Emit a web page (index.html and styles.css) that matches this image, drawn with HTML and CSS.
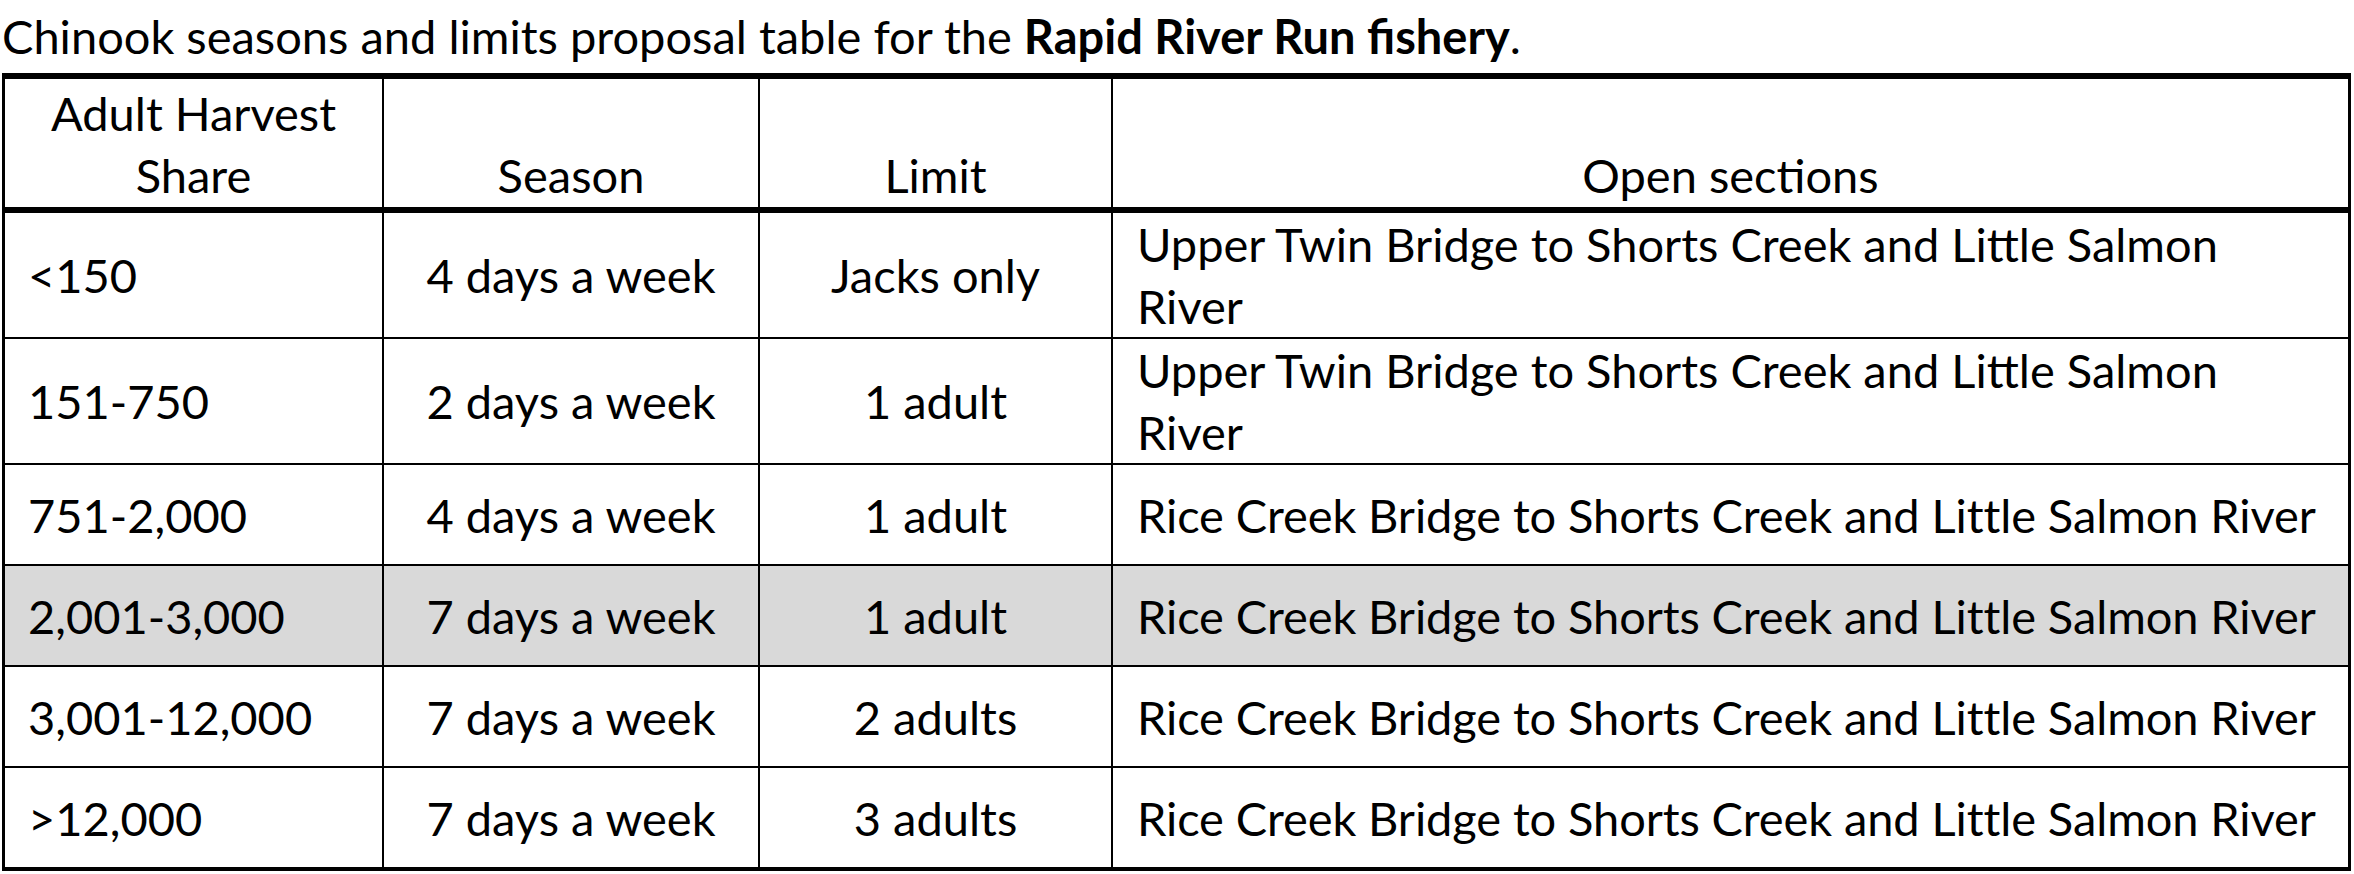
FILE: index.html
```html
<!DOCTYPE html>
<html>
<head>
<meta charset="utf-8">
<link rel="stylesheet" href="styles.css">
</head>
<body>
<p class="caption">Chinook seasons and limits proposal table for the <b>Rapid River Run fishery</b>.</p>
<div class="tbl" role="table">
  <div class="row head" role="row">
    <div class="cell" role="columnheader">Adult Harvest<br>Share</div>
    <div class="cell" role="columnheader">Season</div>
    <div class="cell" role="columnheader">Limit</div>
    <div class="cell" role="columnheader">Open sections</div>
  </div>
  <div class="row two" role="row">
    <div class="cell first" role="cell">&lt;150</div>
    <div class="cell mid" role="cell">4 days a week</div>
    <div class="cell mid" role="cell">Jacks only</div>
    <div class="cell wide" role="cell">Upper Twin Bridge to Shorts Creek and Little Salmon<br>River</div>
  </div>
  <div class="row two" role="row">
    <div class="cell first" role="cell">151-750</div>
    <div class="cell mid" role="cell">2 days a week</div>
    <div class="cell mid" role="cell">1 adult</div>
    <div class="cell wide" role="cell">Upper Twin Bridge to Shorts Creek and Little Salmon<br>River</div>
  </div>
  <div class="row one" role="row">
    <div class="cell first" role="cell">751-2,000</div>
    <div class="cell mid" role="cell">4 days a week</div>
    <div class="cell mid" role="cell">1 adult</div>
    <div class="cell wide single" role="cell">Rice Creek Bridge to Shorts Creek and Little Salmon River</div>
  </div>
  <div class="row one shade" role="row">
    <div class="cell first" role="cell">2,001-3,000</div>
    <div class="cell mid" role="cell">7 days a week</div>
    <div class="cell mid" role="cell">1 adult</div>
    <div class="cell wide single" role="cell">Rice Creek Bridge to Shorts Creek and Little Salmon River</div>
  </div>
  <div class="row one" role="row">
    <div class="cell first" role="cell">3,001-12,000</div>
    <div class="cell mid" role="cell">7 days a week</div>
    <div class="cell mid" role="cell">2 adults</div>
    <div class="cell wide single" role="cell">Rice Creek Bridge to Shorts Creek and Little Salmon River</div>
  </div>
  <div class="row one last" role="row">
    <div class="cell first" role="cell">&gt;12,000</div>
    <div class="cell mid" role="cell">7 days a week</div>
    <div class="cell mid" role="cell">3 adults</div>
    <div class="cell wide single" role="cell">Rice Creek Bridge to Shorts Creek and Little Salmon River</div>
  </div>
</div>
</body>
</html>
```
FILE: styles.css
```css
*, *::before, *::after {
  box-sizing: border-box;
}
html, body {
  margin: 0;
  padding: 0;
  background: #ffffff;
}
body {
  font-family: Lato, "Liberation Sans", sans-serif;
  font-size: 47px;
  color: #000;
  width: 2354px;
}
.caption {
  margin: 0 0 6px 0;
  padding: 5px 0 0 2px;
  height: 67px;
  line-height: 62px;
  white-space: nowrap;
}
.caption b {
  font-weight: 700;
}
.tbl {
  margin-left: 2px;
  width: 2349px;
  border-style: solid;
  border-color: #000;
  border-width: 6px 3px 4px 3px;
}
.row {
  display: grid;
  grid-template-columns: 379px 376px 353px 1fr;
  border-bottom: 2px solid #000;
}
.row.head {
  height: 134px;
  border-bottom: 6px solid #000;
}
.row.two {
  height: 126px;
}
.row.one {
  height: 101px;
}
.row.last {
  height: 99px;
  border-bottom: 0;
}
.row.shade {
  background: #d9d9d9;
}
.cell {
  display: flex;
  align-items: center;
  padding: 0 22px;
  line-height: 62px;
  white-space: nowrap;
  border-right: 2px solid #000;
}
.cell:last-child {
  border-right: 0;
}
.cell.first {
  padding-left: 23px;
}
.cell.wide {
  padding-left: 24px;
}
.cell.single {
  letter-spacing: -0.1px;
}
.cell.mid {
  justify-content: center;
  text-align: center;
}
.head .cell {
  align-items: flex-end;
  justify-content: center;
  text-align: center;
  padding-bottom: 1px;
  font-weight: 400;
}
```
